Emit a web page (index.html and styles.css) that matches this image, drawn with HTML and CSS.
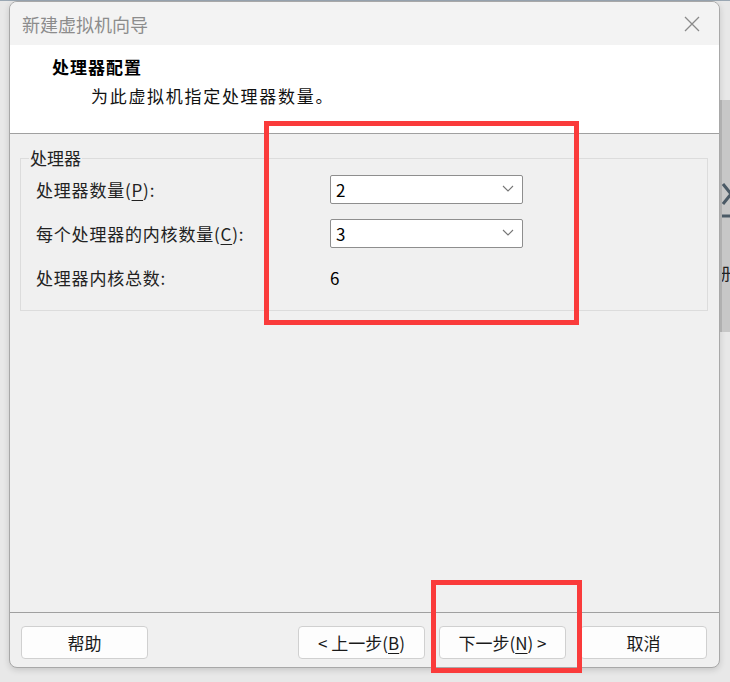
FILE: index.html
```html
<!DOCTYPE html>
<html lang="zh-CN">
<head>
    <meta charset="UTF-8">
    <title>新建虚拟机向导</title>
    <link rel="stylesheet" href="styles.css">
</head>
<body>
    <div class="desk">
        <div class="dialog">
            <div class="titlebar">
                <span class="title">新建虚拟机向导</span>
                <svg class="close" width="16" height="16" viewBox="0 0 16 16">
                    <path d="M1 1 L15 15 M15 1 L1 15" stroke="#8a8a8a" stroke-width="1.3" fill="none"/>
                </svg>
            </div>
            <div class="header">
                <div class="head-title">处理器配置</div>
                <div class="head-sub">为此虚拟机指定处理器数量。</div>
            </div>
            <div class="body">
                <fieldset class="group">
                    <legend>处理器</legend>
                    <div class="row">
                        <span class="label">处理器数量(<u>P</u>):</span>
                        <div class="combo"><span>2</span><svg width="12" height="8" viewBox="0 0 12 8"><path d="M1 1 L6 6 L11 1" stroke="#777" stroke-width="1.1" fill="none"/></svg></div>
                    </div>
                    <div class="row">
                        <span class="label">每个处理器的内核数量(<u>C</u>):</span>
                        <div class="combo"><span>3</span><svg width="12" height="8" viewBox="0 0 12 8"><path d="M1 1 L6 6 L11 1" stroke="#777" stroke-width="1.1" fill="none"/></svg></div>
                    </div>
                    <div class="row">
                        <span class="label">处理器内核总数:</span>
                        <span class="value">6</span>
                    </div>
                </fieldset>
            </div>
            <div class="footer">
                <button class="btn">帮助</button>
                <div class="spacer"></div>
                <button class="btn">&lt; 上一步(<u>B</u>)</button>
                <button class="btn">下一步(<u>N</u>) &gt;</button>
                <button class="btn">取消</button>
            </div>
        </div>
        <div class="side">
            <svg class="side-icon" width="10" height="40" viewBox="0 0 10 40">
                <path d="M1 2 L9 12 L1 22" stroke="#4b5a66" stroke-width="3" fill="none"/>
                <path d="M0 34 L10 34" stroke="#4b5a66" stroke-width="3"/>
            </svg>
            <span class="side-text">册</span>
        </div>
    </div>

    <!-- 标注框 -->
    <div class="mark mark-top"></div>
    <div class="mark mark-bottom"></div>
</body>
</html>
```

FILE: styles.css
```css
body {
    margin: 0;
    background: #e8e8e8;
    font-family: "Noto Sans CJK SC", "Noto Sans", sans-serif;
    width: 730px;
    height: 682px;
    overflow: hidden;
    position: relative;
}
.desk {
    display: flex;
    padding: 0 0 0 9px;
    border-top: 1px solid #9aa7b3;
}
.dialog {
    width: 709px;
    height: 665px;
    border: 1px solid #a8a8a8;
    border-radius: 8px;
    background: #f0f0f0;
    display: flex;
    flex-direction: column;
    overflow: hidden;
    box-shadow: 0 2px 6px rgba(0, 0, 0, 0.15);
}
.titlebar {
    flex-shrink: 0;
    height: 43px;
    background: #f3f3f3;
    display: flex;
    align-items: center;
    justify-content: space-between;
    padding: 0 19px 0 12px;
}
.title {
    color: #8c8c8c;
    font-size: 18px;
}
.header {
    flex-shrink: 0;
    height: 89px;
    background: #ffffff;
    border-bottom: 1px solid #a0a0a0;
    padding: 11px 0 0 42px;
    box-sizing: border-box;
}
.head-title {
    font-size: 17px;
    font-weight: bold;
    letter-spacing: 1px;
    color: #000;
    line-height: 22px;
}
.head-sub {
    font-size: 17px;
    letter-spacing: 1.7px;
    color: #111;
    margin: 7px 0 0 39px;
    line-height: 22px;
}
.body {
    flex: 1;
    padding: 14px 11px 0 10px;
}
.group {
    margin: 0;
    border: 1px solid #dcdcdc;
    height: 163px;
    box-sizing: border-box;
    padding: 0 0 0 15px;
}
.group legend {
    font-size: 17px;
    padding: 0 1px;
    margin-left: -7px;
    color: #222;
    line-height: 20px;
}
.row {
    display: flex;
    align-items: center;
    height: 44px;
}
.row:first-of-type {
    margin-top: -1px;
}
.label {
    width: 294px;
    font-size: 17px;
    letter-spacing: 0.8px;
    color: #222;
}
.label u, .btn u {
    text-decoration-thickness: 1px;
    text-underline-offset: 3px;
}
.combo {
    display: flex;
    align-items: center;
    justify-content: space-between;
    padding: 0 8px 0 5px;
    box-sizing: border-box;
    width: 193px;
    height: 29px;
    border: 1px solid #8e8e8e;
    border-radius: 2px;
    background: #fff;
    font-size: 17px;
    color: #000;
}
.value {
    font-size: 17px;
    color: #000;
}
.footer {
    flex-shrink: 0;
    height: 55px;
    box-sizing: border-box;
    border-top: 1px solid #a0a0a0;
    display: flex;
    align-items: flex-start;
    padding: 13px 12px 0 11px;
    gap: 14px;
}
.spacer {
    flex: 1;
}
.btn {
    width: 127px;
    height: 33px;
    background: #fdfdfd;
    border: 1px solid #d0d0d0;
    border-radius: 4px;
    font-family: inherit;
    font-size: 17px;
    color: #1a1a1a;
    padding: 0;
}
.side {
    flex: 1;
    margin-top: 99px;
    height: 232px;
    background: #c7c7c7;
    border-left: 2px solid #b0b0b0;
    display: flex;
    flex-direction: column;
    align-items: flex-start;
    overflow: hidden;
}
.side-icon {
    margin-top: 82px;
}
.side-text {
    margin-top: 38px;
    font-size: 17px;
    margin-left: -8px;
    color: #222;
}
.mark {
    position: absolute;
    border: 5px solid #fa3b3b;
    box-sizing: border-box;
}
.mark-top {
    left: 264px;
    top: 121px;
    width: 315px;
    height: 204px;
}
.mark-bottom {
    left: 431px;
    top: 580px;
    width: 151px;
    height: 93px;
}
```
